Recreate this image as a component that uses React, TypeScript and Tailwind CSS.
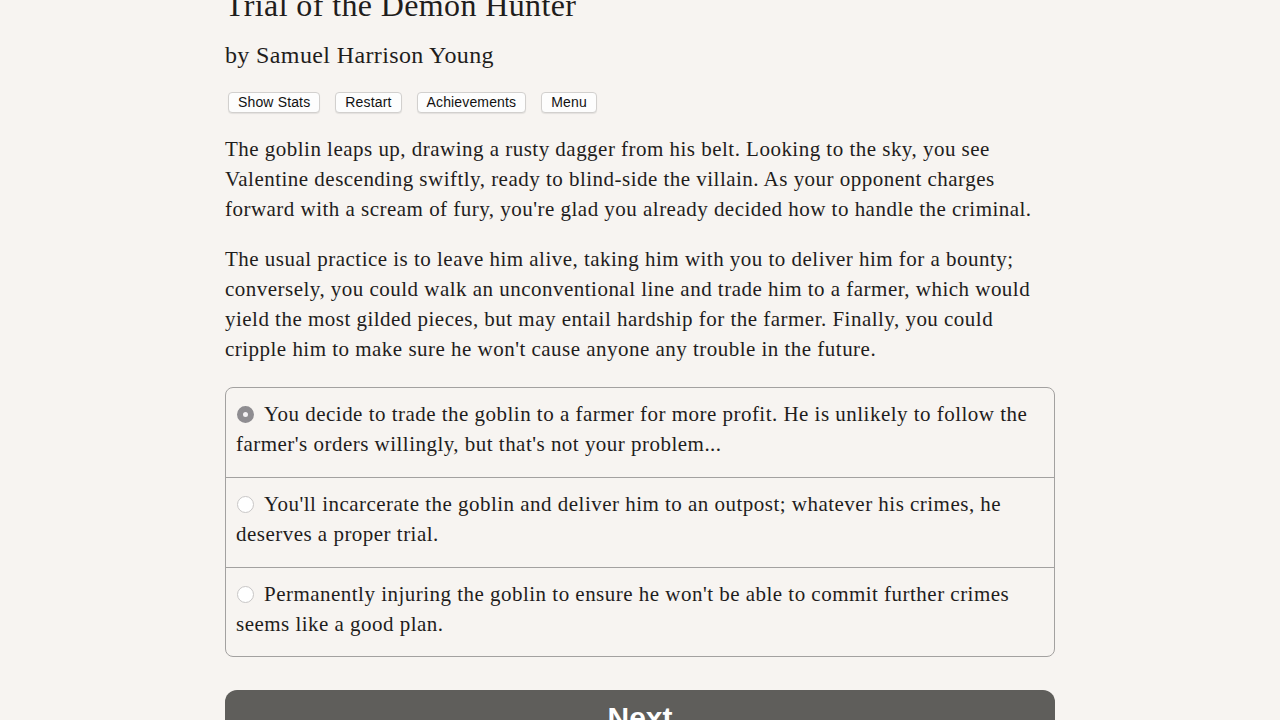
import React from "react";

const serif = { fontFamily: '"Liberation Serif", "DejaVu Serif", serif' };

function Radio({ checked }: { checked?: boolean }) {
  return checked ? (
    <span className="inline-block w-[17px] h-[17px] rounded-full border-[6px] border-[#8f8d91] bg-[#f4f2f4] align-[-2px] mr-[10px] ml-[1px]" />
  ) : (
    <span className="inline-block w-[17px] h-[17px] rounded-full bg-white border border-[#c8c6c6] align-[-2px] mr-[10px] ml-[1px]" />
  );
}

export default function App() {
  const btn =
    "h-[21px] px-[9px] rounded-[4px] border border-[#d2d0ce] bg-[#fdfdfd] text-[14px] leading-[19px] tracking-[0.15px] text-[#111] shadow-[0_1px_1px_rgba(0,0,0,0.08)]";
  return (
    <div className="w-full h-[720px] overflow-hidden bg-[#f7f4f1] text-[#1f1d1c]">
      <div className="w-[830px] mx-auto">
        <h1 className="mt-[-15px] text-[32px] leading-[40px] tracking-[0.38px]" style={serif}>
          Trial of the Demon Hunter
        </h1>
        <div className="mt-[15px] text-[24px] leading-[30px] tracking-[0.37px]" style={serif}>
          by Samuel Harrison Young
        </div>
        <div
          className="mt-[22px] ml-[3px] flex gap-[15px]"
          style={{ fontFamily: '"Liberation Sans", Arial, sans-serif' }}
        >
          <button className={btn}>Show Stats</button>
          <button className={btn}>Restart</button>
          <button className={btn}>Achievements</button>
          <button className={btn}>Menu</button>
        </div>
        <div className="text-[21px] leading-[30px] tracking-[0.48px] whitespace-nowrap" style={serif}>
          <p className="mt-[21px]">
            The goblin leaps up, drawing a rusty dagger from his belt. Looking to the sky, you see
            <br />
            Valentine descending swiftly, ready to blind-side the villain. As your opponent charges
            <br />
            forward with a scream of fury, you're glad you already decided how to handle the criminal.
          </p>
          <p className="mt-[20px]">
            The usual practice is to leave him alive, taking him with you to deliver him for a bounty;
            <br />
            conversely, you could walk an unconventional line and trade him to a farmer, which would
            <br />
            yield the most gilded pieces, but may entail hardship for the farmer. Finally, you could
            <br />
            cripple him to make sure he won't cause anyone any trouble in the future.
          </p>
          <div className="mt-[23px] border border-[#a3a1a0] rounded-[8px] overflow-hidden">
            <div className="h-[89px] pt-[11px] pl-[10px]">
              <Radio checked />
              You decide to trade the goblin to a farmer for more profit. He is unlikely to follow the
              <br />
              farmer's orders willingly, but that's not your problem...
            </div>
            <div className="h-[90px] pt-[11px] pl-[10px] border-t border-[#a3a1a0]">
              <Radio />
              You'll incarcerate the goblin and deliver him to an outpost; whatever his crimes, he
              <br />
              deserves a proper trial.
            </div>
            <div className="h-[89px] pt-[11px] pl-[10px] border-t border-[#a3a1a0]">
              <Radio />
              Permanently injuring the goblin to ensure he won't be able to commit further crimes
              <br />
              seems like a good plan.
            </div>
          </div>
        </div>
        <button
          className="mt-[33px] w-full h-[56px] rounded-[12px] bg-[#5f5e5b] text-white text-[30px] font-bold leading-[50px]"
          style={{ fontFamily: '"Liberation Sans", Arial, sans-serif' }}
        >
          Next
        </button>
      </div>
    </div>
  );
}
